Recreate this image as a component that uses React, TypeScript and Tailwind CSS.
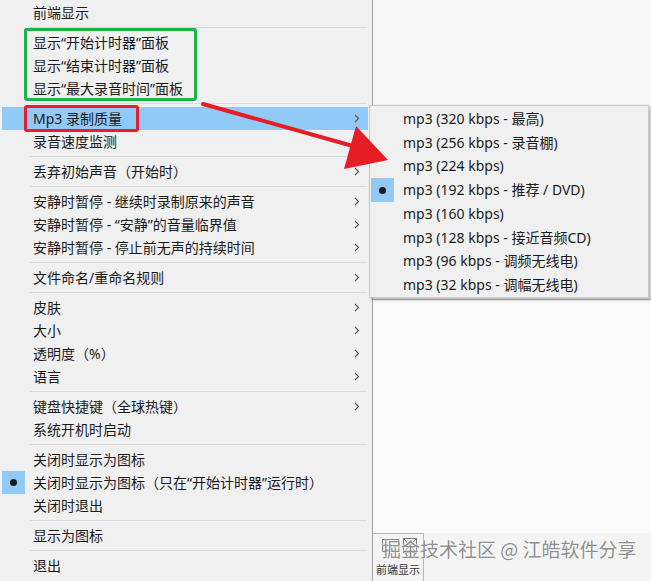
type Item = { label?: string; sub?: boolean; sep?: boolean; active?: boolean; checked?: boolean };

const mainItems: Item[] = [
  { label: '前端显示' },
  { sep: true },
  { label: '显示“开始计时器”面板' },
  { label: '显示“结束计时器”面板' },
  { label: '显示“最大录音时间”面板' },
  { sep: true },
  { label: 'Mp3 录制质量', sub: true, active: true },
  { label: '录音速度监测', sub: true },
  { sep: true },
  { label: '丢弃初始声音（开始时）', sub: true },
  { sep: true },
  { label: '安静时暂停 - 继续时录制原来的声音', sub: true },
  { label: '安静时暂停 - “安静”的音量临界值', sub: true },
  { label: '安静时暂停 - 停止前无声的持续时间', sub: true },
  { sep: true },
  { label: '文件命名/重命名规则', sub: true },
  { sep: true },
  { label: '皮肤', sub: true },
  { label: '大小', sub: true },
  { label: '透明度（%）', sub: true },
  { label: '语言', sub: true },
  { sep: true },
  { label: '键盘快捷键（全球热键）', sub: true },
  { label: '系统开机时启动' },
  { sep: true },
  { label: '关闭时显示为图标' },
  { label: '关闭时显示为图标（只在“开始计时器”运行时）', checked: true },
  { label: '关闭时退出' },
  { sep: true },
  { label: '显示为图标' },
  { sep: true },
  { label: '退出' },
];

const qualities = [
  'mp3 (320 kbps - 最高)',
  'mp3 (256 kbps - 录音棚)',
  'mp3 (224 kbps)',
  'mp3 (192 kbps - 推荐 / DVD)',
  'mp3 (160 kbps)',
  'mp3 (128 kbps - 接近音频CD)',
  'mp3 (96 kbps - 调频无线电)',
  'mp3 (32 kbps - 调幅无线电)',
];

function Chevron() {
  return (
    <svg width="6" height="9" viewBox="0 0 6 9" className="shrink-0">
      <polyline points="1,1 4.5,4.5 1,8" fill="none" stroke="#555" strokeWidth="1.1" />
    </svg>
  );
}

function Bullet() {
  return (
    <div className="w-[23px] h-full bg-[#91c9f7] flex items-center justify-center">
      <div className="w-[7px] h-[7px] rounded-full bg-[#1a1a1a]" />
    </div>
  );
}

function MenuRow({ item }: { item: Item }) {
  if (item.sep) {
    return (
      <div className="h-[7px] flex items-center pl-[30px] pr-[5px]">
        <div className="h-px w-full bg-[#d9d9d9]" />
      </div>
    );
  }
  return (
    <div className={`h-[23px] flex items-center ${item.active ? 'bg-[#91c9f7]' : ''} mr-[4px] ml-[2px]`}>
      <div className="w-[31px] h-full flex items-center">{item.checked && <Bullet />}</div>
      <span className="flex-1 whitespace-nowrap">{item.label}</span>
      <div className="w-[14px] flex justify-start">{item.sub && <Chevron />}</div>
    </div>
  );
}

export default function App() {
  return (
    <div
      className="relative w-[651px] h-[581px] overflow-hidden bg-[#f4f4f4] flex text-[14px] text-[#1a1a1a]"
      style={{ fontFamily: '"Noto Sans", "Noto Sans CJK SC", sans-serif' }}
    >
      {/* main context menu */}
      <div className="w-[373px] h-[581px] bg-[#f0f0f0] border-r border-[#a0a0a0] pt-px flex flex-col leading-none">
        {mainItems.map((it, i) => (
          <MenuRow key={i} item={it} />
        ))}
      </div>

      {/* windows behind */}
      <div className="flex-1 flex flex-col">
        <div className="h-[299px] bg-[#f6f6f6]" />
        <div className="h-[234px] bg-[#fbfbfb] border-t border-[#b5b5b5]" />
        <div className="flex-1 flex">
          <div className="w-[51px] border-t border-r border-[#b5b5b5] bg-[#f4f4f4] flex flex-col items-center pt-[4px]">
            <div className="flex gap-[4px] items-start pl-[3px]">
              <div className="w-[17px] h-[13px] border border-[#777] mt-[1px]" />
              <svg width="14" height="15" viewBox="0 0 14 15">
                <rect x="0.5" y="0.5" width="13" height="14" fill="none" stroke="#777" />
                <line x1="1" y1="1" x2="13" y2="14" stroke="#777" />
                <line x1="13" y1="1" x2="1" y2="14" stroke="#777" />
              </svg>
            </div>
            <span className="text-[11px] leading-none mt-[11px] text-[#333] whitespace-nowrap">前端显示</span>
          </div>
        </div>
      </div>

      {/* quality submenu */}
      <div className="absolute left-[369px] top-[105px] w-[280px] h-[193px] bg-[#f0f0f0] border border-[#c8c8c8] shadow-[2px_2px_3px_rgba(0,0,0,0.25)] pt-[1px] flex flex-col leading-none">
        {qualities.map((q, i) => (
          <div key={q} className="h-[23.8px] flex items-center ml-px">
            <div className="w-[32px] h-full flex items-center">{i === 3 && <Bullet />}</div>
            <span className="whitespace-nowrap">{q}</span>
          </div>
        ))}
      </div>

      {/* annotations */}
      <div className="absolute left-[24px] top-[28px] w-[173px] h-[73px] border-[3px] border-[#1db34a] rounded-[3px]" />
      <div className="absolute left-[24px] top-[105px] w-[115px] h-[27px] border-[3px] border-[#e5202e] rounded-[3px]" />
      <svg className="absolute left-0 top-0" width="651" height="581" viewBox="0 0 651 581">
        <line x1="203" y1="104" x2="360" y2="148" stroke="#e81c24" strokeWidth="4" strokeLinecap="round" />
        <polygon points="388,160 344,169 356,126" fill="#e81c24" />
      </svg>

      {/* watermark */}
      <div
        className="absolute left-[382px] top-[535px] text-[19px] leading-[28px] text-[#8f8f8f] whitespace-nowrap"
        style={{ fontFamily: '"Noto Sans CJK SC", sans-serif', textShadow: '0 0 2px #fff, 0 0 2px #fff' }}
      >
        掘金技术社区 @ 江皓软件分享
      </div>
    </div>
  );
}
